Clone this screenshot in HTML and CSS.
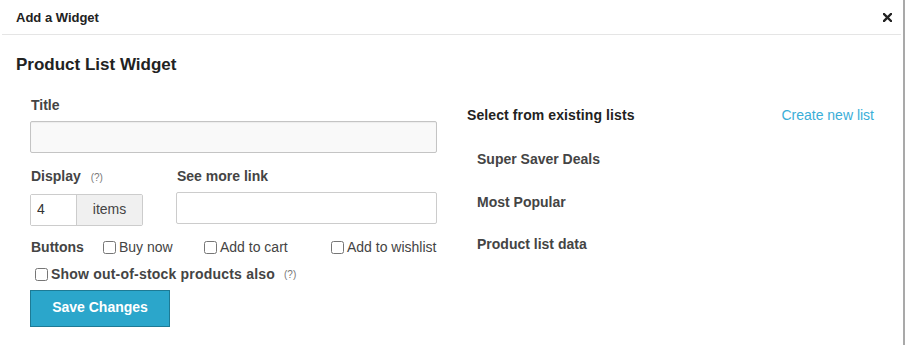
FILE: index.html
```html
<!DOCTYPE html>
<html lang="en">
<head>
  <meta charset="UTF-8" />
  <meta name="viewport" content="width=device-width, initial-scale=1.0" />
  <title>Add a Widget</title>
  <link rel="stylesheet" href="styles.css">
</head>
<body>
  <div class="modal">
    <div class="modal-header">
      <span class="modal-title">Add a Widget</span>
      <button class="modal-close" aria-label="Close">
        <svg width="9" height="9" viewBox="0 0 9 9">
          <path d="M1 1 L8 8 M8 1 L1 8" stroke="#222" stroke-width="2.4" stroke-linecap="square" />
        </svg>
      </button>
    </div>

    <div class="modal-body">
      <h2 class="widget-title">Product List Widget</h2>

      <div class="widget-columns">
        <div class="widget-form">
          <label class="field-label">Title</label>
          <input type="text" class="text-input title-input" />

          <div class="display-row">
            <div class="display-col">
              <label class="field-label">Display <span class="hint">(?)</span></label>
              <div class="input-group">
                <input type="text" class="count-input" value="4" />
                <span class="input-addon">items</span>
              </div>
            </div>
            <div class="more-col">
              <label class="field-label">See more link</label>
              <input type="text" class="text-input" />
            </div>
          </div>

          <div class="buttons-row">
            <span class="buttons-label">Buttons</span>
            <label class="option option-buy"><input type="checkbox" />Buy now</label>
            <label class="option option-cart"><input type="checkbox" />Add to cart</label>
            <label class="option"><input type="checkbox" />Add to wishlist</label>
          </div>

          <div class="stock-row">
            <label class="option option-strong"><input type="checkbox" />Show out-of-stock products also</label>
            <span class="hint">(?)</span>
          </div>

          <button class="save-button">Save Changes</button>
        </div>

        <div class="widget-lists">
          <div class="lists-header">
            <span class="lists-title">Select from existing lists</span>
            <a href="#" class="create-link">Create new list</a>
          </div>
          <ul class="list-items">
            <li>Super Saver Deals</li>
            <li>Most Popular</li>
            <li>Product list data</li>
          </ul>
        </div>
      </div>
    </div>
  </div>
</body>
</html>
```

FILE: styles.css
```css
body {
  margin: 0;
  padding: 0;
  font-family: 'Liberation Sans', Arial, sans-serif;
  background: #fff;
  color: #444;
}

.modal {
  width: 905px;
  height: 345px;
  border-right: 2px solid #a9a9a9;
  box-sizing: border-box;
}

.modal-header {
  height: 34px;
  margin: 0 2px;
  padding: 0 14px;
  border-bottom: 1px solid #e5e5e5;
  display: flex;
  align-items: center;
  justify-content: space-between;
}

.modal-title {
  font-size: 13px;
  font-weight: bold;
  color: #222;
}

.modal-close {
  background: none;
  border: none;
  padding: 0;
  margin-right: -5px;
  display: flex;
  cursor: pointer;
}

.modal-body {
  padding: 0 31px 0 30px;
}

.widget-title {
  margin: 20px 0 0 -14px;
  font-size: 17px;
  line-height: 20px;
  font-weight: bold;
  color: #222;
}

.widget-columns {
  display: grid;
  grid-template-columns: 407px 407px;
  gap: 30px;
  margin-top: 21px;
}

.field-label {
  display: block;
  font-size: 14px;
  line-height: 18px;
  font-weight: bold;
  color: #444;
  margin-bottom: 7px;
  padding-left: 1px;
}

.hint {
  font-size: 10px;
  font-weight: normal;
  color: #777;
  margin-left: 6px;
}

.text-input {
  display: block;
  width: 100%;
  height: 32px;
  box-sizing: border-box;
  border: 1px solid #ccc;
  border-radius: 2px;
  background: #fff;
  font-family: inherit;
  font-size: 14px;
  padding: 0 8px;
}

.title-input {
  background: #f9f9f9;
  border-color: #c4c4c4;
  box-shadow: inset 0 1px 1px rgba(0, 0, 0, 0.05);
}

.display-row {
  display: flex;
  margin-top: 14px;
}

.display-col {
  width: 146px;
}

.more-col {
  flex: 1;
}

.input-group {
  display: flex;
  width: 113px;
  height: 32px;
  border: 1px solid #ccc;
  box-sizing: border-box;
  border-radius: 2px;
}

.count-input {
  width: 46px;
  border: none;
  border-right: 1px solid #ccc;
  padding: 0 6px 2px;
  box-sizing: border-box;
  font-family: inherit;
  font-size: 14px;
  color: #333;
  background: #fff;
}

.input-addon {
  flex: 1;
  background: #f0f0f0;
  display: flex;
  align-items: center;
  justify-content: center;
  padding-bottom: 3px;
  font-size: 14px;
  color: #444;
}

.buttons-row {
  display: flex;
  align-items: center;
  margin-top: 12px;
  line-height: 18px;
  font-size: 14px;
}

.buttons-label {
  width: 73px;
  padding-left: 1px;
  box-sizing: border-box;
  font-weight: bold;
}

.option {
  display: flex;
  align-items: center;
  font-size: 14px;
  line-height: 18px;
  color: #444;
  white-space: nowrap;
}

.option input {
  width: 13px;
  height: 13px;
  margin: 0 3px 0 0;
}

.option-buy {
  width: 101px;
}

.option-cart {
  width: 127px;
}

.stock-row {
  display: flex;
  align-items: center;
  margin-top: 9px;
  padding-left: 5px;
}

.option-strong {
  font-weight: bold;
  letter-spacing: 0.2px;
}

.stock-row .hint {
  margin-left: 9px;
}

.save-button {
  margin-top: 7px;
  width: 140px;
  height: 37px;
  padding: 0 0 3px;
  background: #2ba6cb;
  border: 1px solid #1d7a95;
  color: #fff;
  font-family: inherit;
  font-size: 14px;
  font-weight: bold;
  cursor: pointer;
}

.widget-lists {
  padding-top: 10px;
}

.lists-header {
  display: flex;
  justify-content: space-between;
  line-height: 18px;
  font-size: 14px;
}

.lists-title {
  font-weight: bold;
  color: #222;
  letter-spacing: 0.1px;
}

.create-link {
  color: #3aaed8;
  text-decoration: none;
}

.list-items {
  list-style: none;
  margin: 26px 0 0;
  padding: 0 0 0 10px;
}

.list-items li {
  font-size: 14px;
  line-height: 18px;
  font-weight: bold;
  color: #444;
  margin-bottom: 24.5px;
}
```
